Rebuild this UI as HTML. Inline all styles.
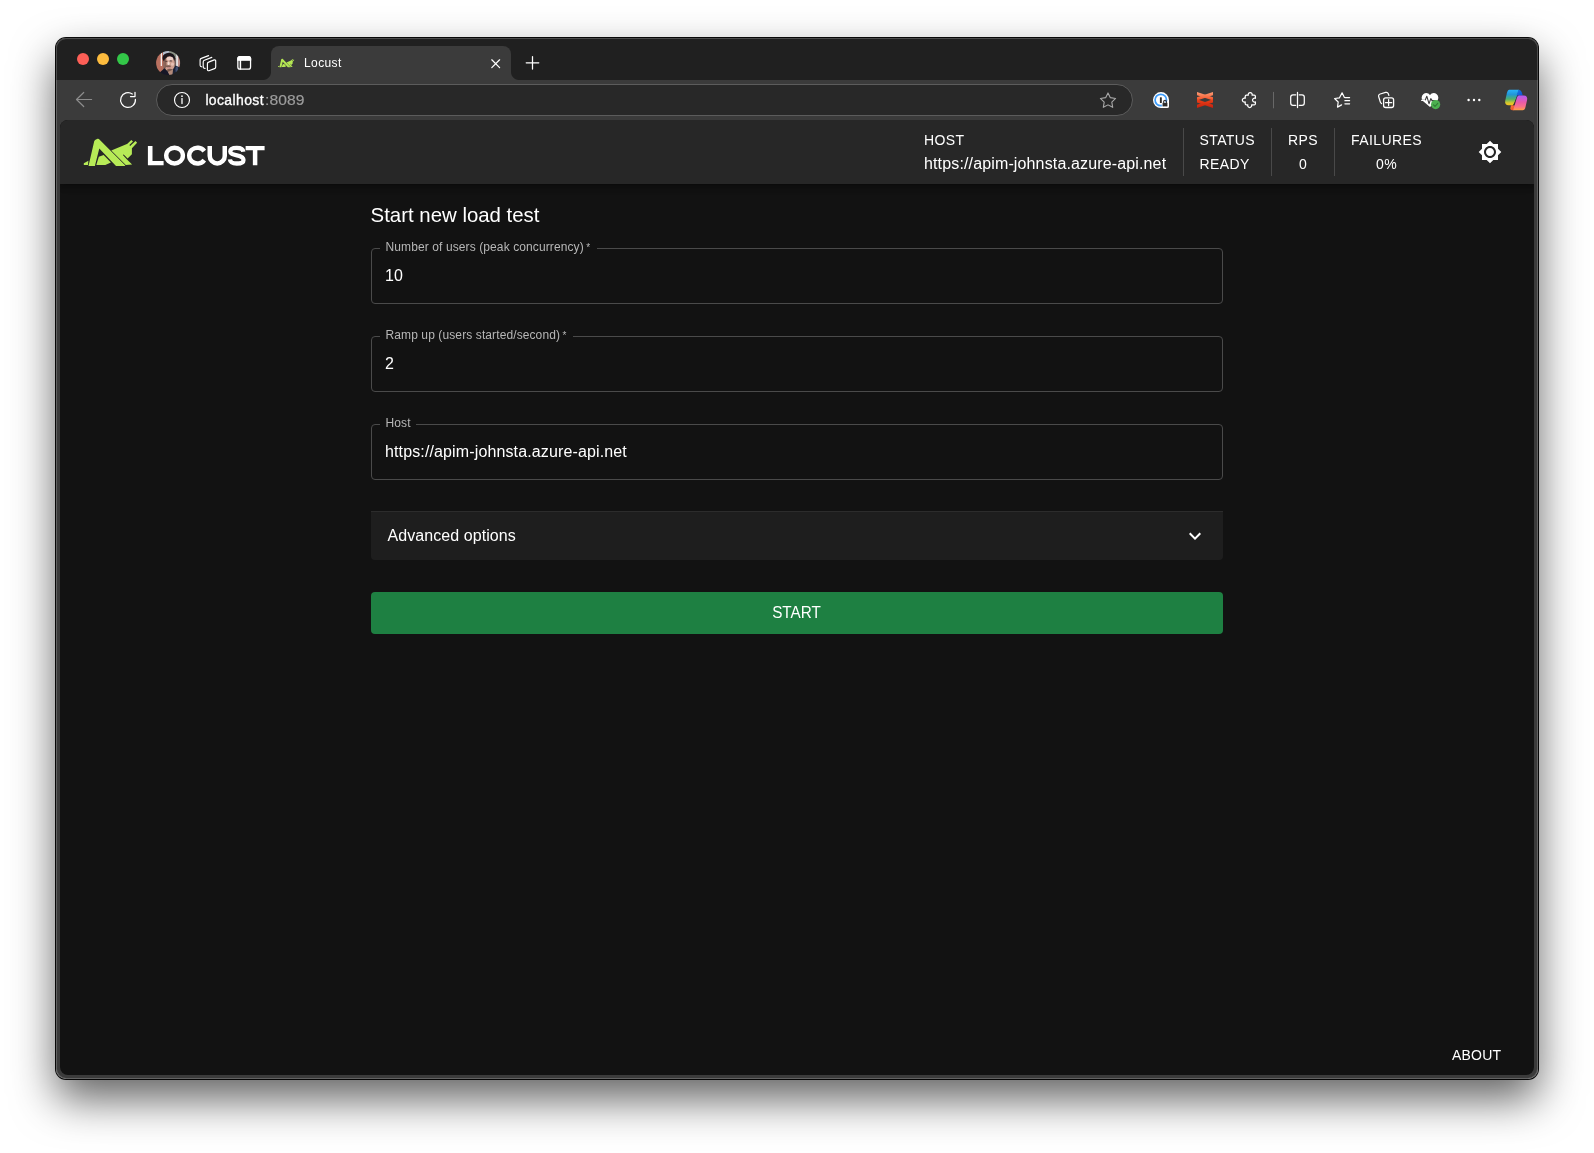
<!DOCTYPE html>
<html lang="en">
<head>
<meta charset="utf-8">
<title>Locust</title>
<style>
*{box-sizing:border-box;margin:0;padding:0}
html,body{width:1594px;height:1153px;overflow:hidden;background:#fff;font-family:"Liberation Sans",sans-serif;}
body{position:relative}
.abs{position:absolute}
#win{will-change:transform;position:absolute;left:56px;top:38px;width:1482px;height:1041px;border-radius:10px;background:#3b3b3b;overflow:hidden;}
#shadow{position:absolute;left:56px;top:38px;width:1482px;height:1041px;border-radius:10px;
 box-shadow:0 0 0 1px rgba(0,0,0,.96),0 20px 44px rgba(0,0,0,.62);}
#inner{position:absolute;left:0;top:-1px;width:1482px;height:1042px}
#rim{position:absolute;left:0;top:0;width:1482px;height:1041px;border-radius:10px;box-shadow:inset 0 0 0 1px rgba(255,255,255,.2);pointer-events:none;z-index:50}
#strip{position:absolute;left:0;top:0;width:1482px;height:43px;background:#202020}
#toolbar{position:absolute;left:0;top:43px;width:1482px;height:40px;background:#3b3b3b}
.tl{position:absolute;top:16px;width:12px;height:12px;border-radius:50%}
#tab{position:absolute;left:215px;top:9px;width:240px;height:34px;background:#3b3b3b;border-radius:8px 8px 0 0}
#tab:before,#tab:after{content:"";position:absolute;bottom:0;width:8px;height:8px;background:radial-gradient(circle at 0 0,rgba(0,0,0,0) 7.5px,#3b3b3b 8.5px)}
#tab:before{left:-8px}
#tab:after{right:-8px;background:radial-gradient(circle at 100% 0,rgba(0,0,0,0) 7.5px,#3b3b3b 8.5px)}
#tabtitle{position:absolute;left:33px;top:9px;font-size:12px;line-height:16px;color:#fff;letter-spacing:.4px}
#addr{position:absolute;left:100px;top:47px;width:977px;height:32px;border-radius:16px;background:#282828;border:1px solid #5c5c5c}
#url{position:absolute;left:48.400px;top:6px;font-size:14px;line-height:18px;color:#fff;white-space:nowrap;letter-spacing:.36px;-webkit-text-stroke:.3px #fff}
#url span{color:#9c9c9c;letter-spacing:.1px;-webkit-text-stroke:.2px #9c9c9c;margin-left:1.300px;display:inline-block;transform:scaleX(1.115);transform-origin:0 50%}
#page{position:absolute;left:4px;top:83px;width:1474px;height:955px;border-radius:8px;background:#121212;overflow:hidden}
#nav{position:absolute;left:0;top:0;width:1474px;height:64px;background:#272727;box-shadow:0 2px 4px -1px rgba(0,0,0,.2),0 4px 5px 0 rgba(0,0,0,.14),0 1px 10px 0 rgba(0,0,0,.12)}
.nl{position:absolute;font-size:14px;line-height:20px;color:#fff;white-space:nowrap;letter-spacing:.4px}
#brand{position:absolute;left:87px;top:10px;font-size:27px;line-height:44px;font-weight:bold;color:#fff;letter-spacing:-2.4px;transform:scaleX(1.22);transform-origin:0 0;white-space:nowrap}
.dv{position:absolute;top:8px;width:1px;height:48px;background:#494949}
.field{position:absolute;left:311px;width:852px;height:56px;border:1px solid #4a4a4a;border-radius:4px}
.field .lab{position:absolute;left:8px;top:-10px;height:16px;padding:0 0 0 5.500px;background:#121212;font-size:12px;line-height:16px;color:#b7b7b7;white-space:nowrap;letter-spacing:.105px}
.ast{font-size:10px;margin-left:2.400px;position:relative;top:-.5px}
.field .val{position:absolute;left:13px;top:15px;font-size:16px;line-height:24px;color:#fff;white-space:nowrap;letter-spacing:.13px}
</style>
</head>
<body>
<div id="shadow"></div>
<div id="win">
 <div id="inner">
  <div id="strip">
    <div class="tl" style="left:21px;background:#fd5f57"></div>
    <div class="tl" style="left:41px;background:#fdbc3e"></div>
    <div class="tl" style="left:61px;background:#33c748"></div>
    <div id="tab"><div id="tabtitle">Locust</div></div>
  </div>
  <div id="toolbar"></div>
  <div id="addr"><div id="url">localhost<span>:8089</span></div></div>

  <svg id="chromeicons" class="abs" style="left:0;top:0" width="1482" height="83" viewBox="56 37 1482 83" fill="none" stroke-linecap="round" stroke-linejoin="round">
    <defs>
      <radialGradient id="av" cx="0.5" cy="0.42" r="0.6"><stop offset="0" stop-color="#c79a86"/><stop offset="0.45" stop-color="#8c5f50"/><stop offset="1" stop-color="#3b2b2a"/></radialGradient>
      <linearGradient id="xx1" x1="0" y1="0" x2="0" y2="1"><stop offset="0" stop-color="#fd9f78"/><stop offset="1" stop-color="#f24a1f"/></linearGradient>
      <linearGradient id="xx2" x1="0" y1="0" x2="0" y2="1"><stop offset="0" stop-color="#ee4218"/><stop offset="1" stop-color="#c4200e"/></linearGradient>
      <linearGradient id="cpL" x1="0" y1="0" x2="0" y2="1"><stop offset="0" stop-color="#29b3fb"/><stop offset="0.3" stop-color="#2296d8"/><stop offset="0.6" stop-color="#4fb06a"/><stop offset="0.85" stop-color="#d9c82c"/><stop offset="1" stop-color="#f7c21c"/></linearGradient>
      <linearGradient id="cpR" x1="0" y1="0" x2="0" y2="1"><stop offset="0" stop-color="#b45cf4"/><stop offset="0.45" stop-color="#e85aa8"/><stop offset="0.75" stop-color="#f8718a"/><stop offset="1" stop-color="#fda046"/></linearGradient>
      <linearGradient id="cpB" x1="0" y1="0" x2="1" y2="1"><stop offset="0" stop-color="#1a7be6"/><stop offset="1" stop-color="#0f4fd0"/></linearGradient>
      <linearGradient id="cpO" x1="0" y1="0" x2="1" y2="1"><stop offset="0" stop-color="#fb7a35"/><stop offset="1" stop-color="#e8432e"/></linearGradient>
    </defs>
    <!-- avatar -->
    <clipPath id="avc"><circle cx="168.100" cy="62.900" r="12"/></clipPath>
    <filter id="avb" x="-20%" y="-20%" width="140%" height="140%"><feGaussianBlur stdDeviation=".5"/></filter>
    <g clip-path="url(#avc)" stroke="none"><g filter="url(#avb)">
      <rect x="152" y="47" width="32" height="32" fill="#6f5f5c"/>
      <rect x="154" y="50" width="9.500" height="26" fill="#b9705e"/>
      <rect x="160.700" y="51" width="1.300" height="15" fill="#f3ebeb"/>
      <rect x="163" y="49" width="6.500" height="6" fill="#b4bccb"/>
      <rect x="169.500" y="49" width="6.800" height="9" fill="#8b9386"/>
      <rect x="176.200" y="53" width="1.700" height="15" fill="#efefef"/>
      <rect x="178" y="54" width="4" height="17" fill="#bf8f88"/>
      <ellipse cx="168.800" cy="58" rx="6.300" ry="5.300" fill="#1d181c"/>
      <ellipse cx="169.500" cy="63.800" rx="5.200" ry="7.600" fill="#cfa08f"/>
      <ellipse cx="170" cy="58.700" rx="3.200" ry="1.900" fill="#ecd0c8"/>
      <ellipse cx="165.300" cy="63.500" rx="1.200" ry="4.500" fill="#8a6256"/>
      <ellipse cx="166.300" cy="61.300" rx="1.300" ry=".65" fill="#5e4642"/>
      <ellipse cx="170.800" cy="60.900" rx="1.300" ry=".65" fill="#5e4642"/>
      <ellipse cx="168.600" cy="63.300" rx="1" ry="1.900" fill="#f3dcd4"/>
      <ellipse cx="172.500" cy="64.200" rx="1.500" ry="1.600" fill="#e6c0b4"/>
      <ellipse cx="168.200" cy="66.300" rx="2.800" ry="1.100" fill="#7d5d52"/>
      <ellipse cx="169" cy="67.700" rx="1.800" ry=".8" fill="#c48888"/>
      <ellipse cx="170" cy="70.200" rx="3" ry="1.500" fill="#7a5a4e"/>
      <path d="M158 74 164.500 68.300 168 72 170.500 77H158z" fill="#141726"/>
      <path d="M173 69.500 175.500 65.500 181 68V76H172z" fill="#1c2236"/>
      <ellipse cx="176.800" cy="69.500" rx="1.400" ry="3" fill="#3f4e70"/>
      <path d="M168 72 173 69.500 172 77H170.500z" fill="#b38a7a"/>
    </g></g>
    <!-- workspaces -->
    <g stroke="#fff" stroke-width="1.150">
      <path d="M208.600 55.600 201.300 58.400a1.800 1.800 0 0 0-1.200 1.700v5.200a1.600 1.600 0 0 0 1.500 1.500"/>
      <path d="M211.800 57.400 204.400 60.200a1.800 1.800 0 0 0-1.200 1.700v5a1.600 1.600 0 0 0 1.900 1.500"/>
      <path d="M208.600 62.100 214.200 59.900a1.100 1.100 0 0 1 1.500 1v6a1.800 1.800 0 0 1-1.200 1.700l-5.600 2.100a1.100 1.100 0 0 1-1.500-1v-5.900a1.800 1.800 0 0 1 1.200-1.700z"/>
    </g>
    <!-- tab actions -->
    <rect x="237.850" y="56.550" width="12.700" height="12.600" rx="2.200" stroke="#fff" stroke-width="1.300"/>
    <path d="M237.850 60.200v-1.450a2.200 2.200 0 0 1 2.200-2.200h8.300a2.200 2.200 0 0 1 2.200 2.200v1.450z" fill="#fff" stroke="#fff" stroke-width="1.300"/>
    <path d="M240.400 60.200v8.900" stroke="#fff" stroke-width="1.500"/>
    <!-- favicon -->
    <g transform="translate(278 58.700) scale(.305 .315) translate(-83.800 -138.700)" fill="#b5e853" stroke="none"><use href="#locustlogo"/></g>
    <!-- tab close -->
    <path d="M491.800 59.800 499.600 67.600M499.600 59.800 491.800 67.600" stroke="#fff" stroke-width="1.250"/>
    <!-- new tab -->
    <path d="M526.200 62.800h12.600M532.500 56.500v12.600" stroke="#fff" stroke-width="1.250"/>
    <!-- back -->
    <path d="M91.600 99.500H76.600M83.700 92.500 76.500 99.500 83.700 106.500" stroke="#8c8c8c" stroke-width="1.200"/>
    <!-- refresh -->
    <path d="M135.400 99.300A7.400 7.400 0 1 1 132.300 94" stroke="#fff" stroke-width="1.250"/>
    <path d="M135 92.300V96.500H130.500" stroke="#fff" stroke-width="1.250"/>
    <!-- info -->
    <circle cx="182" cy="100" r="7.500" stroke="#fff" stroke-width="1.150"/>
    <path d="M182 98.600v5" stroke="#fff" stroke-width="1.300"/>
    <circle cx="182" cy="96.200" r=".85" fill="#fff"/>
    <!-- star -->
    <path d="M1108 92.900l2.350 4.750 5.250.77-3.800 3.700.9 5.230-4.700-2.470-4.700 2.470.9-5.230-3.800-3.700 5.250-.77z" stroke="#a8a8a8" stroke-width="1.100"/>
    <!-- 1password -->
    <path d="M1161 92.100a8 8 0 0 1 8 8v6.300a1.700 1.700 0 0 1-1.700 1.700H1161a8 8 0 0 1 0-16z" fill="#fff"/>
    <circle cx="1160.800" cy="100" r="5.700" stroke="#3d9cfb" stroke-width="1.700"/>
    <rect x="1159.900" y="97.300" width="1.900" height="5.600" rx=".5" fill="#2c2c2c"/>
    <rect x="1162.200" y="102.500" width="5.600" height="4.300" rx="1" fill="#2c2c2c" stroke="#fff" stroke-width=".7"/>
    <path d="M1163.700 102.500v-.9a1.350 1.350 0 0 1 2.700 0v.9" stroke="#2c2c2c" stroke-width="1.100"/>
    <!-- red XX -->
    <g fill="url(#xx1)"><path d="M1197 91.900 1213 97.300V100.600L1197 95.300z"/><path d="M1213 91.900 1197 97.300V100.600L1213 95.300z"/></g>
    <g fill="url(#xx2)"><path d="M1197 108 1213 102.600V99.300L1197 104.700z"/><path d="M1213 108 1197 102.600V99.300L1213 104.700z"/></g>
    <!-- puzzle -->
    <path d="M1246.400 95.200H1248.300a2 2 0 1 1 3.800 0H1254.200a1.200 1.200 0 0 1 1.200 1.200V98.300a2 2 0 1 0 0 3.600V103.700a1.200 1.200 0 0 1-1.200 1.200H1251.600a2 2 0 1 1-3.800 0H1246.400a1.200 1.200 0 0 1-1.200-1.200V101.900a2 2 0 1 1 0-3.600V96.400a1.200 1.200 0 0 1 1.200-1.200z" stroke="#fff" stroke-width="1.250"/>
    <!-- separator -->
    <path d="M1273.500 92.300v15.600" stroke="#686868" stroke-width="1"/>
    <!-- split screen -->
    <path d="M1295.700 94.800h-2.700a2.300 2.300 0 0 0-2.300 2.300v5.900a2.300 2.300 0 0 0 2.300 2.300h2.700M1299.300 94.800h2.700a2.300 2.300 0 0 1 2.300 2.300v5.900a2.300 2.300 0 0 1-2.300 2.300h-2.700M1297.500 92.400v15.200" stroke="#fff" stroke-width="1.250"/>
    <!-- favorites -->
    <path d="M1344.400 97.400 1342.100 92.800 1339.500 97.800 1334.600 98.500 1338.200 102 1337.500 107.100 1341.600 104.900M1344.900 97.600h4.700M1344.900 100.700h4.700M1344.900 103.800h4.700" stroke="#fff" stroke-width="1.200"/>
    <!-- collections -->
    <path d="M1381.600 103.600a2.200 2.200 0 0 1-1.200-1.400l-1.700-5.400a2.200 2.200 0 0 1 1.500-2.800l5.400-1.600a2.200 2.200 0 0 1 2.700 1.400l.6 1.700" stroke="#fff" stroke-width="1.200"/>
    <rect x="1383.600" y="97.800" width="10" height="9.700" rx="2.100" stroke="#fff" stroke-width="1.300"/>
    <path d="M1388.600 99.600v6.100M1385.500 102.650h6.200" stroke="#fff" stroke-width="1.250"/>
    <!-- heart -->
    <path d="M1430 95.300c-1.400-2.600-4.500-2.900-6.500-1.300-2.200 1.800-2.500 4.900-.6 7.100l7.100 5.800 7.100-5.800c1.900-2.200 1.600-5.300-.6-7.100-2-1.600-5.100-1.300-6.500 1.300z" fill="#fff"/>
    <path d="M1421.600 100.400h3.500l1.700-4.200 2.200 7.500 1.800-5.100 1.300 2h2.500" stroke="#3b3b3b" stroke-width="1.100"/>
    <path d="M1421.700 100.400h3.200" stroke="#fff" stroke-width="1.200"/>
    <circle cx="1435.600" cy="104.600" r="4.600" fill="#4caf50"/>
    <path d="M1433.500 104.800l1.500 1.500 2.800-3" stroke="#2f7d33" stroke-width="1.100"/>
    <!-- dots -->
    <circle cx="1468.600" cy="100" r="1.200" fill="#fff"/><circle cx="1474" cy="100" r="1.200" fill="#fff"/><circle cx="1479.300" cy="100" r="1.200" fill="#fff"/>
    <!-- copilot -->
    <path d="M1509.300 89.800h9.600l-4.300 13.200c-.5 1.400-1.700 2.300-3.100 2.300h-3c-2.600 0-3.800-1.600-3.300-4.200l1.600-7.500c.5-2.300 1.300-3.800 2.500-3.800z" fill="url(#cpL)"/>
    <path d="M1518.500 89.800c1.600 0 2.700.9 3.200 2.400l1.100 3.400h-6.300z" fill="url(#cpB)"/>
    <path d="M1511 105.300h4.300l-1.600 4.900h-1.500c-1 0-1.600-.6-1.900-1.600z" fill="url(#cpO)"/>
    <path d="M1517.300 95.800h1.700l-3.900 9.500h-2z" fill="#333"/>
    <path d="M1519 95.600h4.700c2.700 0 4 1.600 3.400 4.300l-1.600 7c-.5 2.100-1.400 3.300-2.800 3.300h-9.600l3.500-11.400c.4-1.800 1.200-3.200 2.400-3.200z" fill="url(#cpR)"/>
  </svg>
  <div id="page">
    <div id="nav">
      <svg class="abs" style="left:0;top:0" width="1474" height="64" viewBox="60 120 1474 64">
        <defs>
          <g id="locustlogo">
            <path d="M83.800 163.300 88.400 160.800 88 165.100H83.800z"/>
            <path d="M88.500 166.100 94.200 141.300Q94.500 140.200 95.500 139.700L97.500 138.800Q98.300 138.500 98.900 139.100L125.300 165.600 124.700 166.100H116L99.300 148.600 94.900 166.100z"/>
            <path d="M98.800 156.800 103.600 154.900 110.900 162.400 105.300 165.100H96.300z"/>
            <path d="M111.300 150.400 126.300 144.300 127.400 143.800 131.300 139.900 133 141.400 129.400 145.100 130.100 146 135.500 140.900 137.100 142.700 131.900 148.200V154.300L127.600 158.500 123.700 154.400 122.900 155.100 127 159.400 132.100 164.400 125.800 165.100z"/>
          </g>
        </defs>
        <use href="#locustlogo" fill="#b7eb57"/>
        <g fill="#fff">
          <path d="M147.900 145.900h4.600v15h11.100v4.400h-15.700z"/>
          <path d="M245.600 145.900h19v4.400h-7.250v15h-4.500v-15h-7.250z"/>
        </g>
        <g fill="none" stroke="#fff">
          <ellipse cx="174.550" cy="155.600" rx="8.350" ry="7.900" stroke-width="4.400"/>
          <path d="M204.300 151.100A8.300 7.900 0 1 0 204.300 160.100" stroke-width="4.400"/>
          <path d="M209.750 145.900V155.900a7.500 7.500 0 0 0 15 0V145.900" stroke-width="4.500"/>
          <path d="M243.300 151.700C243 148.800 240.500 147.900 236.800 147.900 232.800 147.900 230.300 149.100 230.300 151.400 230.300 153.700 232.500 154.400 236.900 155.300 241.600 156.300 243.500 157.300 243.500 159.900 243.500 162.300 240.900 163.500 236.800 163.500 232.600 163.500 230.200 162.300 229.900 159.400" stroke-width="4.300"/>
        </g>
        
        <path transform="translate(1478 140)" fill="#fff" d="M20 8.690V4h-4.690L12 .690 8.690 4H4v4.690L.690 12 4 15.310V20h4.690L12 23.310 15.310 20H20v-4.690L23.310 12zM12 18c-3.310 0-6-2.690-6-6s2.690-6 6-6 6 2.690 6 6-2.690 6-6 6m0-10c-2.210 0-4 1.790-4 4s1.790 4 4 4 4-1.790 4-4-1.790-4-4-4"/>
      </svg>
            <div class="nl" style="left:864px;top:10px">HOST</div>
      <div class="nl" style="left:864px;top:32px;font-size:16px;line-height:24px;letter-spacing:.14px" id="navhost">https://apim-johnsta.azure-api.net</div>
      <div class="dv" style="left:1123px"></div>
      <div class="nl" style="left:1139.500px;top:10px">STATUS</div>
      <div class="nl" style="left:1139.500px;top:34px">READY</div>
      <div class="dv" style="left:1211px"></div>
      <div class="nl" style="left:1228px;top:10px;width:30px;text-align:center">RPS</div>
      <div class="nl" style="left:1228px;top:34px;width:30px;text-align:center">0</div>
      <div class="dv" style="left:1274px"></div>
      <div class="nl" style="left:1291px;top:10px;width:71px;text-align:center">FAILURES</div>
      <div class="nl" style="left:1291px;top:34px;width:71px;text-align:center">0%</div>
    </div>
    <div class="abs" style="left:310.600px;top:79px;font-size:20.400px;line-height:32px;color:#fff">Start new load test</div>
    <div class="field" style="top:128px"><div class="lab" style="width:216.700px">Number of users (peak concurrency)<span class="ast">*</span></div><div class="val">10</div></div>
    <div class="field" style="top:216px"><div class="lab" style="width:193.200px">Ramp up (users started/second)<span class="ast">*</span></div><div class="val">2</div></div>
    <div class="field" style="top:304px"><div class="lab" style="width:35.600px">Host</div><div class="val">https://apim-johnsta.azure-api.net</div></div>
    <div class="abs" style="left:311px;top:391px;width:852px;height:49px;background:#1e1e1e;border-top:1px solid #2c2c2c;border-radius:0 0 4px 4px">
      <div class="abs" style="left:16.500px;top:12px;font-size:16px;line-height:24px;color:#fff;letter-spacing:.07px">Advanced options</div>
      <svg class="abs" style="left:812px;top:12px" width="24" height="24" viewBox="0 0 24 24"><path fill="#fff" d="M16.590 8.590 12 13.170 7.410 8.590 6 10l6 6 6-6z"/></svg>
    </div>
    <div class="abs" style="left:311px;top:472px;width:852px;height:42px;background:#1e8042;border-radius:4px;color:#fff;font-size:16px;line-height:41px;text-align:center"><span style="display:inline-block;position:relative;left:-.8px;transform:scaleX(.955)">START</span></div>
    <div class="abs" style="left:1392px;top:925px;font-size:14px;line-height:20px;color:#fff;letter-spacing:.2px">ABOUT</div>
  </div>
 </div>
  <div id="rim"></div>
</div>
</body>
</html>
